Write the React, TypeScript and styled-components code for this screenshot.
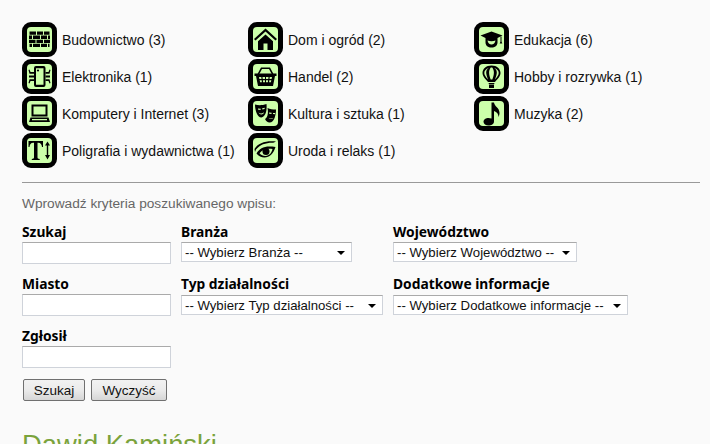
import React from 'react';
import styled, { createGlobalStyle } from 'styled-components';

const GlobalStyle = createGlobalStyle`
  html, body {
    margin: 0;
    padding: 0;
    height: 100%;
    overflow: hidden;
    background: #fafafa;
  }
  body {
    font-family: 'Liberation Sans', Arial, sans-serif;
    color: #111;
  }
`;

const icons: Record<string, React.ReactNode> = {
  brick: (
    <path d="M2.500 4.500h6.500v3.300H2.500zM10 4.500h6v3.300h-6zM17 4.500h5.500v3.300H17zM2 8.600h3v3.300H2zM6 8.600h7v3.300H6zM14 8.600h6v3.300h-6zM21 8.600h2v3.300h-2zM2 12.700h6.500v3.300H2zM9.500 12.700h6.500v3.300H9.500zM17 12.700h6v3.300h-6zM2.500 16.800h2.500v3.300H2.500zM6 16.800h7v3.300H6zM14 16.800h6v3.300h-6zM21 16.800h1.500v3.300H21z" />
  ),
  chip: (
    <g>
      <path fillRule="evenodd" d="M9 2h7.500A2 2 0 0 1 18.500 4v17a2 2 0 0 1-2 2H9a2 2 0 0 1-2-2V4a2 2 0 0 1 2-2zm0 2.200v16.600h7.500V4.200z" />
      <circle cx="11" cy="6.500" r="1.100" />
      <path d="M2.500 5.500l1 2.500h3.500v1.800H2.500L1.500 6zM2 11.500h5v2H2zM2.500 15.200H7V17H3.500l-1 2.500-1-.5zM22.500 5.500l-1 2.500h-3v1.800h4l1-3.800zM23 11.500h-4.500v2H23zM22.500 15.200h-4V17h3l1 2.500 1-.5z" />
    </g>
  ),
  laptop: (
    <g>
      <path fillRule="evenodd" d="M4.500 3.500h16v12h-16zM6.500 5.500v8h12v-8z" />
      <path d="M3.500 16.500h18l1.500 4.500H2zM5 18v1.300h15V18z" />
    </g>
  ),
  type: (
    <g>
      <path d="M1.500 3h14.500v6h-1c-.3-2.500-1.200-4.300-3.800-4.300h-.7v14.500c0 1.300.5 1.600 2.200 1.700v1.100H4.800v-1.100c1.700-.1 2.200-.4 2.200-1.700V4.700h-.7C3.700 4.700 2.800 6.500 2.500 9h-1z" />
      <path d="M20.500 3.500l2.500 4h-1.800v9.500H23l-2.500 4.500-2.500-4.500h1.800V7.500H18z" />
    </g>
  ),
  home: (
    <g>
      <path d="M12.500 1.500L1 12l1.500 1.500 10-9 10 9L24 12z" />
      <path d="M12.500 7.500L5 14.200V23h5.500v-6.500h4V23H20v-8.800z" />
    </g>
  ),
  basket: (
    <g>
      <path fillRule="evenodd" d="M4.500 10L8 3.500h9l3.500 6.500h-1.800L16 5H9l-2.700 5z" />
      <path fillRule="evenodd" d="M1.500 9.500h22v2.500h-1.500L20 22H5L3 12H1.500zM6 13l.4 2h2.100l-.2-2zm3.500 0l.2 2h2.300v-2zm3.500 0v2h2.300l.2-2zm3.700 0l-.2 2h2.100l.4-2zM6.700 16.300l.4 2h1.800l-.2-2zm3.200 0l.2 2h1.900v-2zm3.100 0v2h1.900l.2-2zm3.300 0l-.2 2h1.800l.4-2z" />
    </g>
  ),
  masks: (
    <g>
      <path fillRule="evenodd" d="M2 3.500c3.500 1 7 1 11.500-.5.500 5.500-.2 12-5 13.500C4 16.500 2 9 2 3.500zM5 7.500l2.800.2-.3 1.300-2.300-.2zm4.200-.3l2.500-.4-.1 1.300-2.200.3zM5.500 11.500c1.500 1.300 3.500 1.300 5.500-.3-.6 2.700-4.200 3.100-5.500.3z" />
      <path fillRule="evenodd" d="M14.500 7c2.500 1.200 5 1.500 8.500 1.500 0 5-1.500 13-6.500 13-2 0-3.500-1.500-4.500-3.500 2-1 3.800-5 2.500-11zM16 11.500l.2 1.200 2.300.3.100-1.200zm4 .4v1.200l2 .1.200-1.200zM15.500 18c1.500-1.500 3.700-1.500 5 0-1.600-.8-3.400-.8-5 0z" />
    </g>
  ),
  eye: (
    <g>
      <path d="M1.500 11C5 5 13 2.500 23 3.500c-1 .7-2 1-2.800 1.200C13 4.500 7 6.500 3 11.500L2 14z" />
      <path fillRule="evenodd" d="M3.500 15.500C7 9.500 12 7.500 22.500 9c-2 6.500-6 10.500-11 10.500-3 0-6-1.500-8-4zM6.500 15.300c2.500 3 6.500 3.400 9 1.800 2.500-1.500 3.600-4.200 4-6.200-5.500-.8-10 .5-13 4.400z" />
      <circle cx="13" cy="13.500" r="3.500" />
    </g>
  ),
  cap: (
    <g>
      <path d="M12.500 4.500L1.500 8.500l5 2.500h12l5-2.500z" />
      <path fillRule="evenodd" d="M6.500 11h12v4.500c0 3-2.500 5-6 5s-6-2-6-5zM8.500 13.500c.5 2.500 2 4 4 4s3.500-1.500 4-4c-2.500 1-5.500 1-8 0z" />
      <path d="M21.500 9.500h1v5l.8 2h-2.600l.8-2z" />
    </g>
  ),
  balloon: (
    <g>
      <path fillRule="evenodd" d="M12.500 1.500c5.500 0 9 3.500 9 7.500 0 3.500-3.500 6.500-5.500 9h-7C7 15.500 3.500 12.500 3.500 9c0-4 3.500-7.500 9-7.500zM9.800 3.800C7 4.800 5.300 6.800 5.300 9c0 2.300 2 4.400 3.700 6.500-1-3-1.800-5-1.800-7 0-2 1-3.700 2.600-4.700zm2-.3c-1 1-1.700 3-1.700 5 0 2 .7 5 1.600 7h1.600c.9-2 1.600-5 1.600-7 0-2-.7-4-1.700-5zm3.400.3c1.600 1 2.600 2.700 2.600 4.700 0 2-.8 4-1.800 7 1.700-2.100 3.700-4.200 3.700-6.500 0-2.200-1.700-4.200-4.500-5.200z" />
      <path d="M9.500 19h6l-.5 1.500h-5zM10 21h5v3h-5z" />
    </g>
  ),
  note: (
    <path d="M12.500 1.500h2.500c.3 4 5.500 5 5.500 10.500 0 1.500-.5 3-1 4 0-3-1.500-5-4.500-6v10.500c0 2.700-2.800 4-5.500 4S4.500 23 4.500 20.800c0-2.300 2.500-3.800 5-3.800 1 0 1.800.2 3 .5z" />
  ),
};

type Category = { label: string; icon: string };

const categories: Category[] = [
  { label: 'Budownictwo (3)', icon: 'brick' },
  { label: 'Dom i ogród (2)', icon: 'home' },
  { label: 'Edukacja (6)', icon: 'cap' },
  { label: 'Elektronika (1)', icon: 'chip' },
  { label: 'Handel (2)', icon: 'basket' },
  { label: 'Hobby i rozrywka (1)', icon: 'balloon' },
  { label: 'Komputery i Internet (3)', icon: 'laptop' },
  { label: 'Kultura i sztuka (1)', icon: 'masks' },
  { label: 'Muzyka (2)', icon: 'note' },
  { label: 'Poligrafia i wydawnictwa (1)', icon: 'type' },
  { label: 'Uroda i relaks (1)', icon: 'eye' },
];

export default function App() {
  return (
    <>
      <GlobalStyle />
      <S.Page>
        <S.Categories>
          {categories.map((c) => (
            <S.Category key={c.label}>
              <S.Tile>
                <svg viewBox="0 0 25 25" width="25" height="25" fill="#000">
                  {icons[c.icon]}
                </svg>
              </S.Tile>
              <S.CategoryName>{c.label}</S.CategoryName>
            </S.Category>
          ))}
        </S.Categories>
        <S.Rule />
        <S.Intro>Wprowadź kryteria poszukiwanego wpisu:</S.Intro>
        <S.Form>
          <S.Field>
            <S.Label>Szukaj</S.Label>
            <S.TextInput />
          </S.Field>
          <S.Field>
            <S.Label>Branża</S.Label>
            <S.SelectBox $width={171}>
              <S.Select>
                <option>-- Wybierz Branża --</option>
              </S.Select>
            </S.SelectBox>
          </S.Field>
          <S.Field>
            <S.Label>Województwo</S.Label>
            <S.SelectBox $width={184}>
              <S.Select>
                <option>-- Wybierz Województwo --</option>
              </S.Select>
            </S.SelectBox>
          </S.Field>
          <S.Field>
            <S.Label>Miasto</S.Label>
            <S.TextInput />
          </S.Field>
          <S.Field>
            <S.Label>Typ działalności</S.Label>
            <S.SelectBox $width={202} $drop>
              <S.Select>
                <option>-- Wybierz Typ działalności --</option>
              </S.Select>
            </S.SelectBox>
          </S.Field>
          <S.Field>
            <S.Label>Dodatkowe informacje</S.Label>
            <S.SelectBox $width={235} $drop>
              <S.Select>
                <option>-- Wybierz Dodatkowe informacje --</option>
              </S.Select>
            </S.SelectBox>
          </S.Field>
          <S.Field>
            <S.Label>Zgłosił</S.Label>
            <S.TextInput />
          </S.Field>
        </S.Form>
        <S.Buttons>
          <S.Button type="button" $width={62}>Szukaj</S.Button>
          <S.Button type="button" $width={76}>Wyczyść</S.Button>
        </S.Buttons>
        <S.Heading>Dawid Kamiński</S.Heading>
      </S.Page>
    </>
  );
}

const S = {
  Page: styled.div`
    padding: 22px 10px 0 22px;
    height: 444px;
    box-sizing: border-box;
    overflow: hidden;
  `,
  Categories: styled.div`
    display: grid;
    grid-template-columns: repeat(3, 226px);
    grid-auto-rows: 37px;
  `,
  Category: styled.div`
    display: flex;
    align-items: flex-start;
    gap: 5px;
  `,
  Tile: styled.div`
    width: 35px;
    height: 35px;
    box-sizing: border-box;
    border: 5px solid #000;
    border-radius: 9px;
    background: #ccffaa;
    flex: none;
    display: flex;
    align-items: center;
    justify-content: center;
    svg {
      flex: none;
    }
  `,
  CategoryName: styled.span`
    font-size: 14px;
    line-height: 37px;
    color: #111;
  `,
  Rule: styled.div`
    height: 1px;
    background: #999;
    margin-top: 12px;
  `,
  Intro: styled.div`
    font-size: 13.7px;
    line-height: 16px;
    color: #666;
    margin-top: 13px;
  `,
  Form: styled.div`
    display: grid;
    grid-template-columns: 159px 212px 1fr;
    row-gap: 12px;
    margin-top: 12px;
  `,
  Field: styled.div`
    display: flex;
    flex-direction: column;
    align-items: flex-start;
  `,
  Label: styled.label`
    font-family: 'Noto Sans', Verdana, sans-serif;
    font-size: 13.8px;
    font-weight: bold;
    line-height: 16px;
    height: 18px;
    color: #000;
  `,
  TextInput: styled.input`
    width: 149px;
    height: 22px;
    box-sizing: border-box;
    border: 1px solid #cfd3da;
    border-top-color: #aaa;
    background: #fff;
    padding: 0;
  `,
  SelectBox: styled.div<{ $width: number; $drop?: boolean }>`
    position: relative;
    width: ${(p) => p.$width}px;
    height: 20px;
    margin-top: ${(p) => (p.$drop ? '1px' : '0')};
    &::after {
      content: '';
      position: absolute;
      right: 7px;
      top: 9px;
      border-left: 4px solid transparent;
      border-right: 4px solid transparent;
      border-top: 4px solid #000;
      pointer-events: none;
    }
  `,
  Select: styled.select`
    appearance: none;
    width: 100%;
    height: 100%;
    box-sizing: border-box;
    border: 1px solid #cfd3da;
    border-top-color: #aaa;
    background: #fff;
    padding: 0 0 0 3px;
    margin: 0;
    border-radius: 0;
    font-family: 'Liberation Sans', Arial, sans-serif;
    font-size: 13.2px;
    color: #111;
  `,
  Buttons: styled.div`
    display: flex;
    gap: 6px;
    margin: 11px 0 0 1px;
  `,
  Button: styled.button<{ $width: number }>`
    width: ${(p) => p.$width}px;
    height: 22px;
    box-sizing: border-box;
    padding: 0;
    border: 1px solid #707070;
    border-radius: 2px;
    background: linear-gradient(#f2f2f2, #ebebeb 50%, #d6d6d6);
    font-family: 'Liberation Sans', Arial, sans-serif;
    font-size: 13.5px;
    color: #111;
  `,
  Heading: styled.h2`
    font-size: 27.4px;
    font-weight: normal;
    line-height: 30px;
    color: #7aa33c;
    margin: 29px 0 0;
  `,
};
